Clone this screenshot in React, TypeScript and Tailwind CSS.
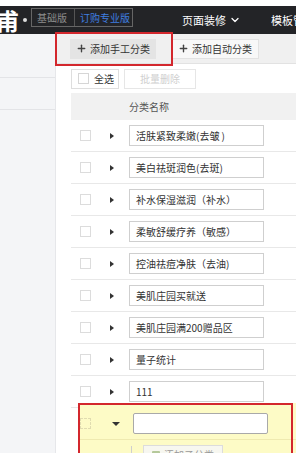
import { Plus, ChevronDown } from "lucide-react";

const categories = [
  "活肤紧致柔嫩(去皱 )",
  "美白祛斑润色(去斑)",
  "补水保湿滋润（补水）",
  "柔敏舒缓疗养（敏感）",
  "控油祛痘净肤（去油)",
  "美肌庄园买就送",
  "美肌庄园满200赠品区",
  "量子统计",
  "111",
];

const font = { fontFamily: '"Noto Sans CJK SC", "Liberation Sans", sans-serif' };

const RightArrow = () => (
  <div className="w-0 h-0 border-y-[3.5px] border-y-transparent border-l-[4px] border-l-[#333]" />
);

const DownArrow = () => (
  <div className="w-0 h-0 border-x-[4px] border-x-transparent border-t-[4px] border-t-[#333]" />
);

const CategoryRow = ({ name }: { name: string }) => (
  <div className="flex items-center h-[32px] border-b border-[#e8e8e8]">
    <div className="ml-[9px] w-[11px] h-[11px] border border-[#dcdcdc] bg-white" />
    <div className="ml-[19px]">
      <RightArrow />
    </div>
    <div className="ml-[15px] w-[135px] h-[21px] border border-[#cfcfcf] bg-white flex items-center pl-[6px] text-[10px] text-[#333] whitespace-nowrap">
      {name}
    </div>
  </div>
);

export default function App() {
  return (
    <div className="relative w-[296px] h-[453px] overflow-hidden bg-white" style={font}>
      {/* top bar */}
      <div className="h-[6px] bg-white" />
      <div className="h-[28px] bg-[#232427] flex items-center text-white whitespace-nowrap">
        <span className="shrink-0 -ml-[4px] text-[23px] font-bold leading-none">甫</span>
        <span className="shrink-0 ml-[4px] w-[4px] h-[4px] rounded-full bg-[#ddd]" />
        <div className="shrink-0 ml-[4px] self-start mt-[2px] flex h-[19px] border border-[#666] text-[10px] leading-none">
          <span className="w-[42px] flex items-center pl-[5px] text-[#8d8d8d]">基础版</span>
          <span className="w-px bg-[#555]" />
          <span className="w-[57px] flex items-center pl-[5px] text-[#3f7fe0]">订购专业版</span>
        </div>
        <span className="shrink-0 ml-[49px] text-[11px]">页面装修</span>
        <ChevronDown className="shrink-0 ml-[3px] w-[12px] h-[12px]" strokeWidth={2.5} />
        <span className="shrink-0 ml-[30px] text-[11px]">模板管理</span>
      </div>

      <div className="flex">
        {/* sidebar */}
        <div className="shrink-0 w-[56px] h-[419px] bg-[#f4f5f7] border-r border-[#e6e7ea]">
          <div className="h-[44px] border-b border-[#e3e4e7]" />
          <div className="h-[32px] border-b border-[#e3e4e7]" />
        </div>

        {/* content */}
        <div className="flex-1">
          <div className="h-[30px] bg-[#f0f0f0] border-b border-[#e2e2e2] flex items-center pl-[14px] gap-[16px]">
            <button className="h-[20px] w-[86px] bg-[#e4e4e4] flex items-center pl-[6px] text-[10px] text-[#333] whitespace-nowrap">
              <Plus className="w-[11px] h-[11px] text-[#444]" strokeWidth={3} />
              <span className="ml-[3px]">添加手工分类</span>
            </button>
            <button className="h-[20px] w-[87px] bg-[#f8f8f8] border border-[#e2e2e2] flex items-center pl-[5px] text-[10px] text-[#333] whitespace-nowrap">
              <Plus className="w-[11px] h-[11px] text-[#444]" strokeWidth={3} />
              <span className="ml-[3px]">添加自动分类</span>
            </button>
          </div>

          <div className="h-[29px] flex items-center pl-[15px] gap-[5px]">
            <div className="h-[20px] w-[48px] border border-[#dedede] bg-white flex items-center pl-[6px] text-[10px] text-[#333]">
              <div className="w-[11px] h-[11px] border border-[#d6d6d6]" />
              <span className="ml-[5px]">全选</span>
            </div>
            <div className="h-[20px] w-[72px] border border-[#e6e6e6] bg-white flex items-center justify-center text-[10px] text-[#cfcfcf]">
              批量删除
            </div>
          </div>

          <div className="ml-[15px] h-[27px] bg-[#f1f1f1] flex items-center pl-[58px] text-[10px] text-[#555]">
            分类名称
          </div>

          <div className="ml-[15px]">
            {categories.map((c) => (
              <CategoryRow key={c} name={c} />
            ))}
          </div>

          {/* new category being edited */}
          <div className="ml-[22px] -mt-[5px] pt-[5px] bg-[#fdfbc6]">
            <div className="flex items-center h-[32px] border-b border-[#efeab0]">
              <div className="ml-[2px] w-[11px] h-[11px] border border-dashed border-[#e0dcb0]" />
              <div className="ml-[21px]">
                <DownArrow />
              </div>
              <div className="ml-[13px] w-[135px] h-[21px] rounded-[2px] border border-[#a9a9a9] bg-white" />
            </div>
            <div className="flex h-[20px]">
              <div className="ml-[53px] mt-[6px] w-px bg-[#cfcfcf]" />
              <div className="ml-[11px] mt-[5px] h-[18px] w-[80px] border border-[#dcdcdc] bg-[#f7f7f0] flex items-center pl-[8px] text-[10px] text-[#999] whitespace-nowrap">
                <div className="w-[8px] h-[7px] bg-[#b5c99a] rounded-[1px]" />
                <span className="ml-[4px]">添加子分类</span>
              </div>
            </div>
          </div>
        </div>
      </div>

      {/* red annotation boxes */}
      <div className="absolute left-[55px] top-[32px] w-[118px] h-[34px] border-2 border-[#d3272d]" />
      <div className="absolute left-[78px] top-[403px] w-[215px] h-[60px] border-2 border-[#d3272d]" />
    </div>
  );
}
